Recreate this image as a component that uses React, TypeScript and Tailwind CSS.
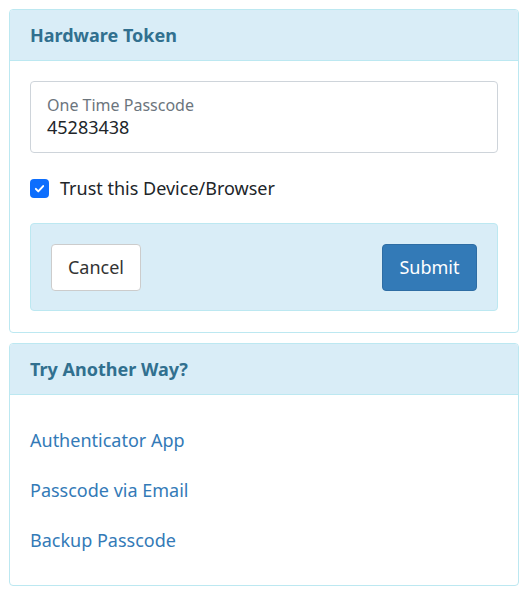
export default function App() {
  return (
    <div
      className="min-h-screen bg-white p-[9px] pr-[10px] text-[#333]"
      style={{ fontFamily: '"Segoe UI", "Noto Sans", "Open Sans", sans-serif' }}
    >
      <div className="overflow-hidden rounded border border-[#bce8f1]">
        <div className="flex h-[51px] items-center border-b border-[#bce8f1] bg-[#d9edf7] px-5">
          <h2 className="text-[18px] font-bold text-[#31708f]">Hardware Token</h2>
        </div>
        <div className="px-5 pt-5 pb-[21px]">
          <div className="flex h-[72px] flex-col justify-center rounded border border-[#ced4da] px-4">
            <span className="text-[16px] leading-5 text-[#6c757d]">One Time Passcode</span>
            <span className="text-[18px] leading-6 text-[#212529]">45283438</span>
          </div>
          <label className="mt-[22px] flex items-center gap-[11px]">
            <span className="flex h-[19px] w-[19px] items-center justify-center rounded-[4px] bg-[#0d6efd]">
              <svg viewBox="0 0 16 16" className="h-[13px] w-[13px]" fill="none">
                <path d="M3.5 8.5l3 3 6-6.5" stroke="white" strokeWidth="2.4" strokeLinecap="round" strokeLinejoin="round" />
              </svg>
            </span>
            <span className="text-[18px] text-[#212529]">Trust this Device/Browser</span>
          </label>
          <div className="mt-[21px] flex h-[88px] items-center justify-between rounded border border-[#bce8f1] bg-[#d9edf7] px-5">
            <button className="h-[47px] w-[90px] rounded border border-[#ccc] bg-white pt-px text-[18px] text-[#333]">
              Cancel
            </button>
            <button className="h-[47px] w-[95px] rounded border border-[#2e6da4] bg-[#337ab7] pt-px text-[18px] text-white">
              Submit
            </button>
          </div>
        </div>
      </div>

      <div className="mt-[10px] overflow-hidden rounded border border-[#bce8f1]">
        <div className="flex h-[51px] items-center border-b border-[#bce8f1] bg-[#d9edf7] px-5">
          <h2 className="text-[18px] font-bold text-[#31708f]">Try Another Way?</h2>
        </div>
        <div className="flex flex-col px-5 pt-[33px] pb-[33px]">
          <a className="h-[50px] text-[18px] leading-6 text-[#337ab7]">Authenticator App</a>
          <a className="h-[50px] text-[18px] leading-6 text-[#337ab7]">Passcode via Email</a>
          <a className="text-[18px] leading-6 text-[#337ab7]">Backup Passcode</a>
        </div>
      </div>
    </div>
  );
}
